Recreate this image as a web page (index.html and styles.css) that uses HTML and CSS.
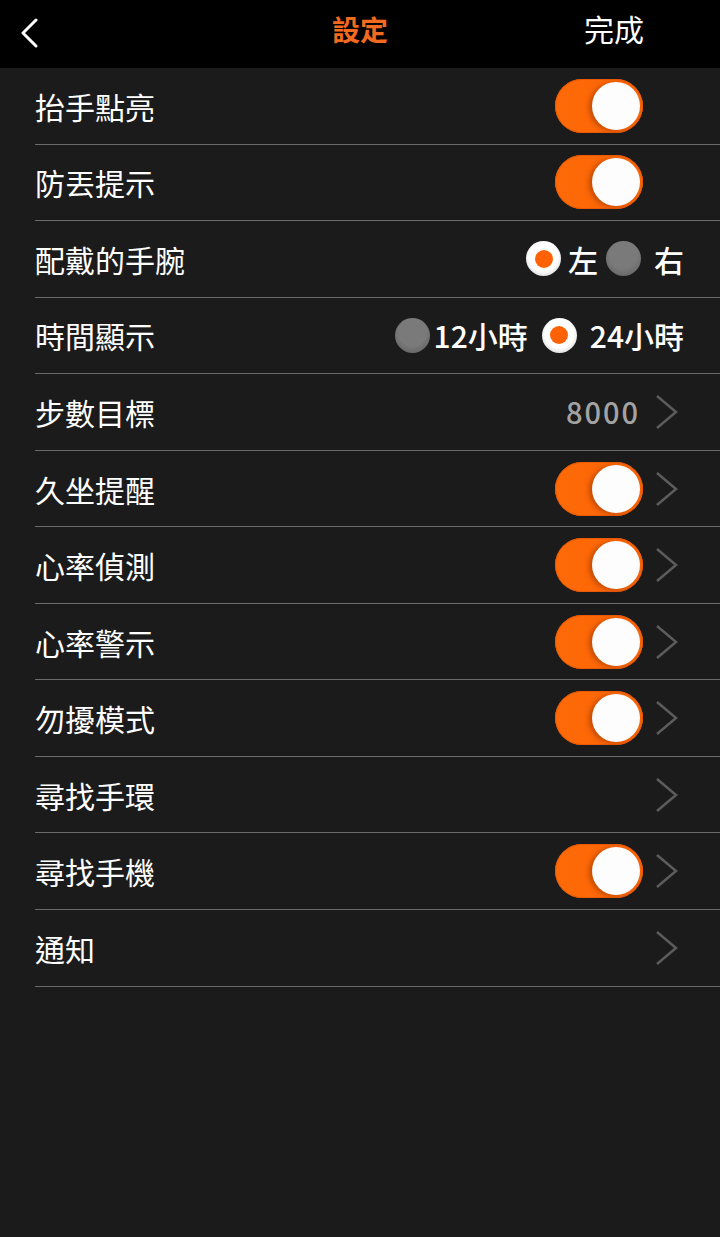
FILE: index.html
```html
<!DOCTYPE html>
<html lang="zh-Hant">
<head>
<meta charset="utf-8">
<title>設定</title>
<link rel="stylesheet" href="styles.css">
</head>
<body>
<div class="app">
  <header class="topbar">
    <div class="back">
      <svg width="20" height="30" viewBox="0 0 20 30"><polyline points="16,2 3,15 16,28" fill="none" stroke="#fff" stroke-width="3" stroke-linecap="round" stroke-linejoin="round"/></svg>
    </div>
    <div class="title">設定</div>
    <div class="done">完成</div>
  </header>
  <ul class="list">
    <li class="row"><span class="label">抬手點亮</span><span class="ctrl"><span class="toggle"><span class="knob"></span></span><span class="chev"></span></span></li>
    <li class="row"><span class="label">防丟提示</span><span class="ctrl"><span class="toggle"><span class="knob"></span></span><span class="chev"></span></span></li>
    <li class="row radio-row"><span class="label">配戴的手腕</span>
      <span class="ctrl radios">
        <span class="radio on"></span><span class="rlabel l1">左</span>
        <span class="radio off r2"></span><span class="rlabel l2">右</span>
      </span></li>
    <li class="row radio-row"><span class="label">時間顯示</span>
      <span class="ctrl radios">
        <span class="radio off"></span><span class="rlabel t1">12小時</span>
        <span class="radio on t2"></span><span class="rlabel t3">24小時</span>
      </span></li>
    <li class="row"><span class="label">步數目標</span><span class="ctrl"><span class="value">8000</span><span class="chev"><svg width="24" height="34" viewBox="0 0 24 34"><polyline points="2,1 21,17 2,33" fill="none" stroke="#5c5c5c" stroke-width="2.5"/></svg></span></span></li>
    <li class="row"><span class="label">久坐提醒</span><span class="ctrl"><span class="toggle"><span class="knob"></span></span><span class="chev"><svg width="24" height="34" viewBox="0 0 24 34"><polyline points="2,1 21,17 2,33" fill="none" stroke="#5c5c5c" stroke-width="2.5"/></svg></span></span></li>
    <li class="row"><span class="label">心率偵測</span><span class="ctrl"><span class="toggle"><span class="knob"></span></span><span class="chev"><svg width="24" height="34" viewBox="0 0 24 34"><polyline points="2,1 21,17 2,33" fill="none" stroke="#5c5c5c" stroke-width="2.5"/></svg></span></span></li>
    <li class="row"><span class="label">心率警示</span><span class="ctrl"><span class="toggle"><span class="knob"></span></span><span class="chev"><svg width="24" height="34" viewBox="0 0 24 34"><polyline points="2,1 21,17 2,33" fill="none" stroke="#5c5c5c" stroke-width="2.5"/></svg></span></span></li>
    <li class="row"><span class="label">勿擾模式</span><span class="ctrl"><span class="toggle"><span class="knob"></span></span><span class="chev"><svg width="24" height="34" viewBox="0 0 24 34"><polyline points="2,1 21,17 2,33" fill="none" stroke="#5c5c5c" stroke-width="2.5"/></svg></span></span></li>
    <li class="row"><span class="label">尋找手環</span><span class="ctrl"><span class="chev"><svg width="24" height="34" viewBox="0 0 24 34"><polyline points="2,1 21,17 2,33" fill="none" stroke="#5c5c5c" stroke-width="2.5"/></svg></span></span></li>
    <li class="row"><span class="label">尋找手機</span><span class="ctrl"><span class="toggle"><span class="knob"></span></span><span class="chev"><svg width="24" height="34" viewBox="0 0 24 34"><polyline points="2,1 21,17 2,33" fill="none" stroke="#5c5c5c" stroke-width="2.5"/></svg></span></span></li>
    <li class="row"><span class="label">通知</span><span class="ctrl"><span class="chev"><svg width="24" height="34" viewBox="0 0 24 34"><polyline points="2,1 21,17 2,33" fill="none" stroke="#5c5c5c" stroke-width="2.5"/></svg></span></span></li>
  </ul>
</div>
</body>
</html>
```

FILE: styles.css
```css
* { box-sizing: border-box; }
html, body {
  margin: 0;
  padding: 0;
  background: #1b1b1b;
}
body {
  width: 720px;
  height: 1237px;
  overflow: hidden;
  font-family: "Noto Sans CJK TC", "Noto Sans", sans-serif;
  color: #fff;
}
.app {
  width: 720px;
  min-height: 1237px;
  background: #1b1b1b;
}
.topbar {
  height: 68px;
  background: #000;
  display: grid;
  grid-template-columns: 1fr auto 1fr;
  align-items: center;
  padding-bottom: 12px;
}
.back {
  padding-left: 20px;
  display: flex;
  align-items: center;
  padding-top: 10px;
}
.title {
  font-size: 28px;
  font-weight: 700;
  color: #f26a1f;
  line-height: 1;
  padding-top: 2px;
}
.done {
  justify-self: end;
  padding-right: 76px;
  font-size: 30px;
  line-height: 1;
}
.list {
  list-style: none;
  margin: 0;
  padding: 0;
}
.row {
  margin-left: 35px;
  height: 76.55px;
  border-bottom: 1px solid #6b6b6b;
  display: flex;
  align-items: center;
  justify-content: space-between;
}
.label {
  font-size: 30px;
  font-weight: 400;
  line-height: 1;
}
.ctrl {
  display: flex;
  align-items: center;
}
.chev {
  width: 77px;
  padding-left: 12px;
  display: flex;
  align-items: center;
}
.toggle {
  width: 88px;
  height: 54px;
  border-radius: 27px;
  background: linear-gradient(90deg, #ff6a08 0%, #fb6506 100%);
  box-shadow: inset 0 0 0 1px #e85a05;
  display: flex;
  align-items: center;
  justify-content: flex-end;
  padding-right: 3px;
}
.knob {
  width: 48px;
  height: 48px;
  border-radius: 50%;
  background: #fdfdfd;
  box-shadow: -3px 1px 5px rgba(120, 40, 0, 0.45);
}
.value {
  font-size: 29px;
  font-weight: 500;
  color: #a3a3a3;
  letter-spacing: 2px;
  line-height: 1;
  margin-right: 3px;
}
.radio-row { padding-right: 36px; }
.radio {
  width: 35px;
  height: 35px;
  border-radius: 50%;
  display: flex;
  align-items: center;
  justify-content: center;
}
.radio.on {
  background: radial-gradient(circle at 50% 45%, #ffffff 55%, #e4e4e4 72%, #a8a8a8 100%);
}
.radio.on::after {
  content: "";
  width: 18px;
  height: 18px;
  border-radius: 50%;
  background: #ff6206;
}
.radio.off {
  background: radial-gradient(circle at 50% 40%, #7a7a7a 50%, #6a6a6a 75%, #444 100%);
}
.rlabel {
  font-size: 30px;
  font-weight: 500;
  line-height: 1;
}
.l1 { margin-left: 7px; }
.r2 { margin-left: 8px; }
.l2 { margin-left: 13px; }
.t1 { margin-left: 4px; }
.t2 { margin-left: 14px; }
.t3 { margin-left: 13px; }
```
